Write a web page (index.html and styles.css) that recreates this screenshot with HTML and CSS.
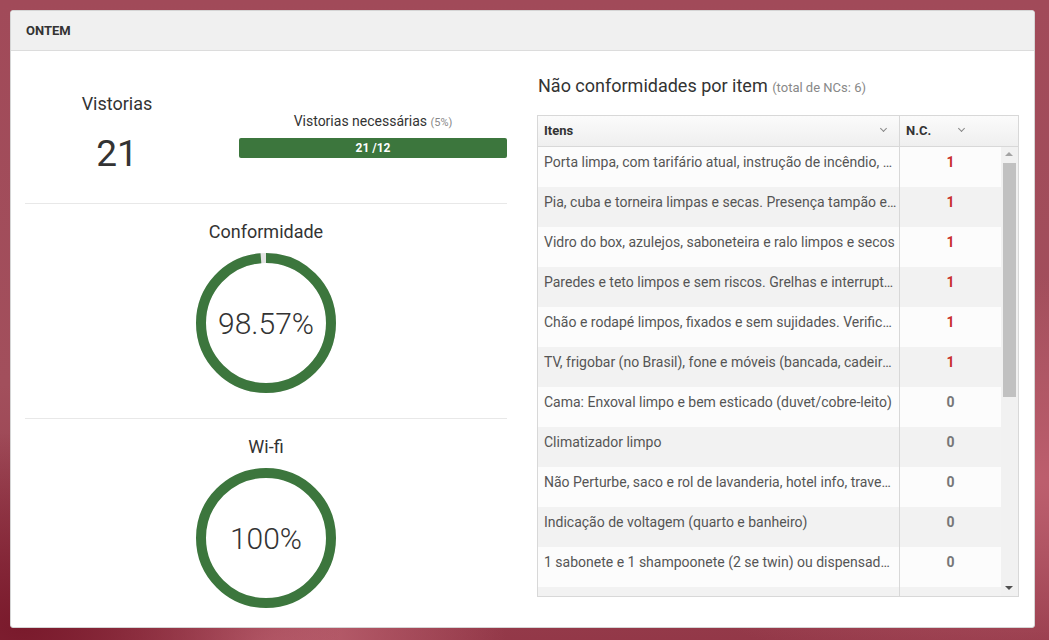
FILE: index.html
```html
<!DOCTYPE html>
<html lang="pt-BR">
<head>
    <meta charset="UTF-8">
    <title>Ontem</title>
    <link rel="stylesheet" href="styles.css">
</head>
<body>

<div class="panel">
    <div class="panel-heading">ONTEM</div>
    <div class="panel-body">

        <div class="col-left">
            <div class="section section-top">
                <div class="visits">
                    <div class="stat-title">Vistorias</div>
                    <div class="visits-number">21</div>
                </div>
                <div class="needed">
                    <div class="needed-label">Vistorias necessárias <small>(5%)</small></div>
                    <div class="progress"><div class="progress-bar">21 /12</div></div>
                </div>
            </div>

            <div class="section">
                <div class="stat-title">Conformidade</div>
                <div class="donut">
                    <svg width="140" height="140" viewBox="0 0 140 140">
                        <circle cx="70" cy="70" r="65" fill="none" stroke="#e3e3e3" stroke-width="10"/>
                        <circle cx="70" cy="70" r="65" fill="none" stroke="#3c763d" stroke-width="10"
                                stroke-dasharray="402.57 408.41" transform="rotate(-90 70 70)"/>
                    </svg>
                    <span class="donut-value">98.57%</span>
                </div>
            </div>

            <div class="section section-last">
                <div class="stat-title">Wi-fi</div>
                <div class="donut">
                    <svg width="140" height="140" viewBox="0 0 140 140">
                        <circle cx="70" cy="70" r="65" fill="none" stroke="#3c763d" stroke-width="10"/>
                    </svg>
                    <span class="donut-value">100%</span>
                </div>
            </div>
        </div>

        <div class="col-right">
            <h3 class="nc-title">Não conformidades por item <small>(total de NCs: 6)</small></h3>

            <div class="grid">
                <div class="grid-head">
                    <div class="th th-item">Itens <span class="chev"></span></div>
                    <div class="th th-nc">N.C. <span class="chev"></span></div>
                </div>
                <div class="grid-body">
                    <div class="rows" id="rows"></div>
                    <div class="scrollbar">
                        <span class="arrow arrow-up"></span>
                        <div class="thumb"></div>
                        <span class="arrow arrow-down"></span>
                    </div>
                </div>
            </div>
        </div>

    </div>
</div>

<script>
    const items = [
        ['Porta limpa, com tarifário atual, instrução de incêndio, olho mágico e trinco', 1],
        ['Pia, cuba e torneira limpas e secas. Presença tampão e copos', 1],
        ['Vidro do box, azulejos, saboneteira e ralo limpos e secos', 1],
        ['Paredes e teto limpos e sem riscos. Grelhas e interruptores limpos', 1],
        ['Chão e rodapé limpos, fixados e sem sujidades. Verificar cantos', 1],
        ['TV, frigobar (no Brasil), fone e móveis (bancada, cadeira) limpos', 1],
        ['Cama: Enxoval limpo e bem esticado (duvet/cobre-leito)', 0],
        ['Climatizador limpo', 0],
        ['Não Perturbe, saco e rol de lavanderia, hotel info, travesseiro extra', 0],
        ['Indicação de voltagem (quarto e banheiro)', 0],
        ['1 sabonete e 1 shampoonete (2 se twin) ou dispensadores cheios', 0],
        ['Toalhas de banho e rosto limpas, dobradas e sem manchas', 0],
        ['Cortinas limpas e blackout funcionando', 0]
    ];

    const rows = document.getElementById('rows');
    items.forEach(item => {
        const row = document.createElement('div');
        row.className = 'row';
        row.innerHTML = '<div class="td td-item"></div><div class="td td-nc"></div>';
        row.querySelector('.td-item').textContent = item[0];
        const nc = row.querySelector('.td-nc');
        nc.textContent = item[1];
        if (item[1] > 0) nc.classList.add('nc-bad');
        rows.appendChild(row);
    });
</script>

</body>
</html>
```

FILE: styles.css
```css
body {
    margin: 0;
    padding: 10px 14px 0 10px;
    height: 640px;
    box-sizing: border-box;
    overflow: hidden;
    font-family: Roboto, "Noto Sans", Arial, sans-serif;
    color: #333;
    background: radial-gradient(ellipse at 2% 98%, #7a1a2c 0%, rgba(122, 26, 44, 0) 22%),
                radial-gradient(ellipse at 25% 102%, #c26876 0%, rgba(194, 104, 118, 0) 22%),
                radial-gradient(ellipse at 98% 75%, #bd5f6e 0%, rgba(189, 95, 110, 0) 30%),
                linear-gradient(180deg, #a14a59 0%, #a24f5c 60%, #933848 100%);
}
.panel {
    height: 618px;
    background: #fff;
    border: 1px solid #d5d5d5;
    border-radius: 3px;
    box-sizing: border-box;
    display: flex;
    flex-direction: column;
    overflow: hidden;
}
.panel-heading {
    height: 39px;
    line-height: 39px;
    padding: 0 15px;
    background: #f0f0f0;
    border-bottom: 1px solid #dcdcdc;
    font-size: 13px;
    font-weight: bold;
    color: #333;
}
.panel-body {
    flex: 1;
    display: grid;
    grid-template-columns: 482px 482px;
    column-gap: 30px;
    padding: 0 15px 0 14px;
    min-height: 0;
}

/* left column */
.section {
    border-bottom: 1px solid #e8e8e8;
    padding: 18px 0 25px;
    text-align: center;
}
.section-last {
    border-bottom: none;
}
.section-top {
    height: 153px;
    padding: 0;
    display: flex;
    box-sizing: border-box;
}
.stat-title {
    font-size: 18px;
    line-height: 20px;
}
.visits {
    width: 184px;
    margin-top: 43px;
}
.visits-number {
    font-size: 37px;
    line-height: 40px;
    margin-top: 20px;
}
.needed {
    width: 268px;
    margin-left: 30px;
    margin-top: 62px;
}
.needed-label {
    font-size: 14px;
    line-height: 16px;
    height: 16px;
}
.needed-label small {
    font-size: 11px;
    line-height: 1;
    color: #888;
}
.progress {
    margin-top: 9px;
    height: 20px;
    border-radius: 2px;
    background: #f5f5f5;
    overflow: hidden;
}
.progress-bar {
    height: 100%;
    width: 100%;
    background: #3c763d;
    color: #fff;
    font-size: 12px;
    font-weight: bold;
    line-height: 20px;
}
.donut {
    position: relative;
    width: 140px;
    height: 140px;
    margin: 11px auto 0;
}
.donut svg {
    display: block;
}
.donut-value {
    position: absolute;
    left: 0;
    right: 0;
    top: 50%;
    transform: translateY(-50%);
    font-size: 30px;
    font-weight: 300;
    color: #333;
}

/* right column */
.col-right {
    display: flex;
    flex-direction: column;
    min-height: 0;
}
.nc-title {
    margin: 25px 0 17px 1px;
    font-size: 18px;
    line-height: 20px;
    font-weight: normal;
    color: #333;
}
.nc-title small {
    font-size: 13px;
    color: #888;
}
.grid {
    height: 482px;
    border: 1px solid #d8d8d8;
    box-sizing: border-box;
    display: flex;
    flex-direction: column;
}
.grid-head {
    display: flex;
    height: 30px;
    border-bottom: 1px solid #d8d8d8;
    background: linear-gradient(180deg, #fbfbfb, #efefef);
    flex-shrink: 0;
}
.th {
    position: relative;
    font-size: 13px;
    font-weight: bold;
    line-height: 30px;
    padding-left: 6px;
    box-sizing: border-box;
}
.th-item {
    width: 362px;
    border-right: 1px solid #d8d8d8;
}
.th-nc {
    flex: 1;
}
.chev {
    position: absolute;
    top: 10px;
    width: 4px;
    height: 4px;
    border-right: 1px solid #888;
    border-bottom: 1px solid #888;
    transform: rotate(45deg);
}
.th-item .chev {
    right: 13px;
}
.th-nc .chev {
    left: 59px;
}
.grid-body {
    flex: 1;
    display: flex;
    min-height: 0;
}
.rows {
    flex: 1;
    overflow: hidden;
}
.row {
    display: flex;
    height: 40px;
    background: #fcfcfc;
}
.row:nth-child(even) {
    background: #f2f2f2;
}
.td {
    font-size: 14px;
    line-height: 16px;
    padding-top: 7px;
    box-sizing: border-box;
    color: #555;
}
.td-item {
    width: 362px;
    padding-left: 6px;
    padding-right: 2px;
    border-right: 1px solid #d8d8d8;
    white-space: nowrap;
    overflow: hidden;
    text-overflow: ellipsis;
}
.td-nc {
    flex: 1;
    text-align: center;
    font-weight: bold;
    color: #777;
}
.td-nc.nc-bad {
    color: #c9302c;
}
.scrollbar {
    position: relative;
    width: 17px;
    background: #f1f1f1;
    flex-shrink: 0;
}
.thumb {
    position: absolute;
    left: 2px;
    right: 2px;
    top: 16px;
    height: 234px;
    background: #c1c1c1;
}
.arrow {
    position: absolute;
    left: 4px;
    width: 0;
    height: 0;
    border-left: 4px solid transparent;
    border-right: 4px solid transparent;
}
.arrow-up {
    top: 5px;
    border-bottom: 4px solid #a3a3a3;
}
.arrow-down {
    bottom: 6px;
    border-top: 4px solid #505050;
}
```
